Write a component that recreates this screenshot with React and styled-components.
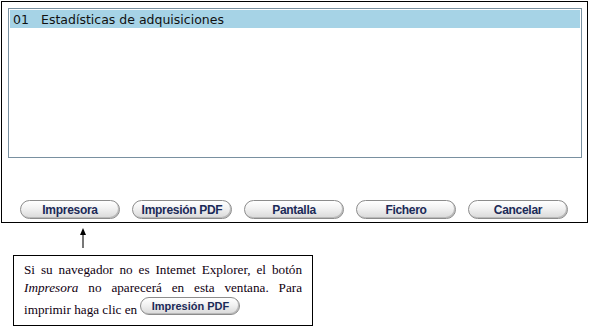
import React from "react";
import styled, { createGlobalStyle } from "styled-components";

const Global = createGlobalStyle`
  html, body { margin: 0; padding: 0; background: #fff; }
  body { font-family: "DejaVu Sans", Verdana, sans-serif; }
`;

const Page = styled.div`
  padding: 1px 0 0 1px;
  width: 594px;
  box-sizing: border-box;
`;

const Frame = styled.div`
  width: 587px;
  height: 222px;
  box-sizing: border-box;
  border: 1px solid #000;
  padding: 6px 5px 0 6px;
  display: flex;
  flex-direction: column;
`;

const ListBox = styled.div`
  height: 150px;
  box-sizing: border-box;
  border: 1px solid #7990a0;
  padding: 1px;
`;

const Row = styled.div`
  height: 18px;
  background: #a6d3e6;
  display: flex;
  align-items: center;
  font-family: "DejaVu Sans", Verdana, sans-serif;
  font-size: 12.5px;
  color: #111;
  padding-left: 3px;
`;

const Code = styled.span`
  width: 28px;
`;

const ButtonBar = styled.div`
  display: flex;
  gap: 12px;
  margin-top: 42px;
  padding-left: 12px;
`;

const PillButton = styled.button`
  width: ${(p) => p.$w || 100}px;
  height: ${(p) => p.$h || 19}px;
  box-sizing: border-box;
  border: 1px solid #8c8c8c;
  border-radius: 10px;
  background: linear-gradient(#ffffff 0%, #f3f3f3 40%, #d9d9d9 100%);
  box-shadow: inset -1px -1px 0 #b9b9b9;
  font-family: "Liberation Sans", Arial, sans-serif;
  font-weight: bold;
  font-size: ${(p) => p.$fs || 12}px;
  letter-spacing: ${(p) => p.$ls ?? -0.3}px;
  color: #1b2a58;
  padding: 0;
  display: inline-flex;
  align-items: center;
  justify-content: center;
  vertical-align: ${(p) => p.$va || "middle"};
  cursor: pointer;
`;

const ArrowWrap = styled.div`
  margin: 5px 0 0 77px;
  width: 10px;
  height: 20px;
`;

const Note = styled.div`
  margin: 7px 0 0 12px;
  width: 300px;
  height: 71px;
  box-sizing: border-box;
  border: 1px solid #000;
  padding: 5px 10px 0 10px;
  font-family: "Liberation Serif", "Times New Roman", serif;
  font-size: 13.2px;
  line-height: 18px;
  text-align: justify;
  color: #100010;
`;

const Em = styled.i``;

const buttons = ["Impresora", "Impresión PDF", "Pantalla", "Fichero", "Cancelar"];

export default function App() {
  return (
    <>
      <Global />
      <Page>
        <Frame>
          <ListBox>
            <Row>
              <Code>01</Code>
              <span>Estadísticas de adquisiciones</span>
            </Row>
          </ListBox>
          <ButtonBar>
            {buttons.map((b) => (
              <PillButton key={b}>{b}</PillButton>
            ))}
          </ButtonBar>
        </Frame>
        <ArrowWrap>
          <svg width="10" height="20" viewBox="0 0 10 20">
            <rect x="4" y="6" width="2" height="14" fill="#777" />
            <polygon points="5,0 8,7 2,7" fill="#000" />
          </svg>
        </ArrowWrap>
        <Note>
          Si su navegador no es Intemet Explorer, el botón <Em>Impresora</Em> no aparecerá en esta ventana. Para
          imprimir haga clic en{" "}
          <PillButton $w={100} $h={18} $fs={11} $ls={0} $va="4px">Impresión PDF</PillButton>
        </Note>
      </Page>
    </>
  );
}
